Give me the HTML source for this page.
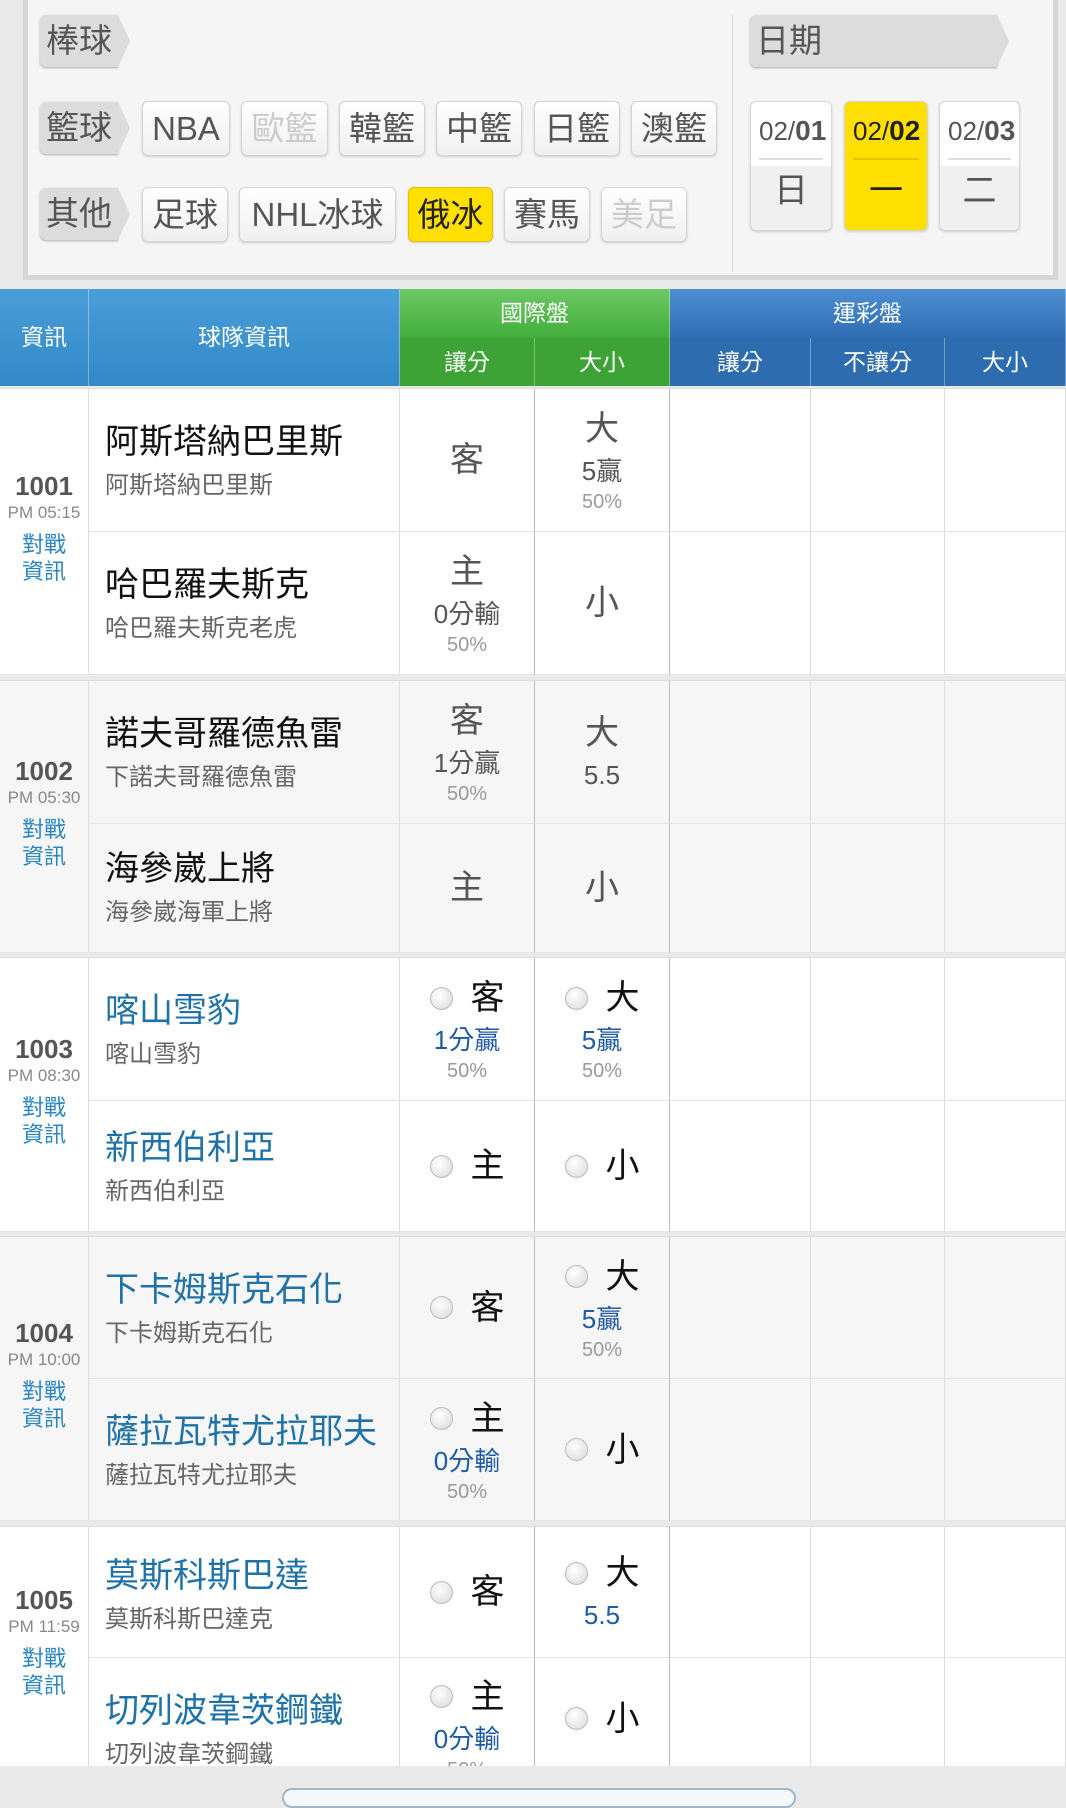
<!DOCTYPE html>
<html><head><meta charset="utf-8">
<style>
*{margin:0;padding:0;box-sizing:border-box}
body{width:1066px;height:1791px;overflow:hidden;background:#e9e9e9;font-family:"Liberation Sans","Noto Sans CJK TC",sans-serif;position:relative}
.panel{position:absolute;left:23px;top:-4px;width:1035px;height:284px;background:#f5f5f5;border:5px solid #d6d6d6;border-top:none}
.lbl{position:absolute;height:52px;background:#dcdcdc;color:#555;font-size:33px;line-height:52px;padding-left:6px;border-radius:6px 0 0 6px;box-shadow:0 1px 2px #aaa}
.lbl:after{content:"";position:absolute;right:-12px;top:0;border-left:12px solid #dcdcdc;border-top:26px solid transparent;border-bottom:26px solid transparent}
.btn{position:absolute;height:55px;background:linear-gradient(#fff,#f0f0f0);border:1px solid #d4d4d4;border-radius:6px;font-size:33px;line-height:53px;text-align:center;color:#555;box-shadow:0 1px 2px #ccc}
.dis{color:#ccc}
.sel{background:#ffe000;border-color:#e0c000;color:#222}
.dv{position:absolute;left:709px;top:15px;width:1px;height:257px;background:#d8d8d8}
.date{position:absolute;top:101px;height:130px;border:1px solid #d6d6d6;border-radius:6px;background:linear-gradient(#fff 50%,#f0f0f0 50%);text-align:center;color:#555;box-shadow:0 1px 2px #ccc}
.date .d{font-size:26px;height:58px;line-height:58px;border-bottom:2px solid #ddd;margin:0 8px}
.date .d b{font-size:28px}
.date .w{font-size:34px;line-height:62px}
.date.sel{background:#ffdf00;color:#222}
.date.sel .d{border-color:#e8c400}
.hdr{position:absolute;top:289px;height:97px;left:0;width:1066px;color:#fff;font-size:23px}
.hdr div{position:absolute;text-align:center;border-right:1px solid rgba(255,255,255,.35)}
.blk{position:absolute;left:0;width:1066px;display:grid;grid-template-columns:89px 311px 135px 135px 141px 134px 121px;background:#fff;border-top:1px solid #ddd}
.blk.g{background:#f6f6f6}
.blk>div{border-right:1px solid #ddd;border-bottom:1px solid #e4e4e4}
.blk>div.od{border-right:1px solid #bbb}
.info{grid-row:span 2;display:flex;flex-direction:column;align-items:center;justify-content:center;padding-bottom:8px}
.info .n{font-size:26px;font-weight:bold;color:#555;line-height:30px}
.info .t{font-size:17px;color:#888;line-height:24px}
.info .l{font-size:22px;color:#2a86c4;line-height:27px;margin-top:6px;text-align:center}
.team{padding-left:16px;padding-top:30px}
.team .a{font-size:34px;color:#111;line-height:46px}
.team .a.b{color:#1e72a8}
.team .s{font-size:24px;color:#666;line-height:42px}
.od{display:flex;flex-direction:column;align-items:center;justify-content:center}
.m{font-size:34px;color:#555;line-height:46px;display:flex;align-items:center}
.m.k{color:#111}
.r{width:23px;height:23px;border-radius:50%;border:1px solid #bbb;background:radial-gradient(circle at 40% 35%,#fff,#d8d8d8);margin-right:18px}
.v{font-size:26px;color:#555;line-height:38px}
.v.b{color:#1f5aa6}
.p{font-size:20px;color:#999;line-height:24px}
</style></head><body>
<div class="panel"></div>
<div class="lbl" style="left:40px;top:15px;width:78px">棒球</div>
<div class="lbl" style="left:40px;top:102px;width:78px">籃球</div>
<div class="lbl" style="left:40px;top:188px;width:78px">其他</div>
<div class="btn" style="left:142px;top:101px;width:88px">NBA</div>
<div class="btn dis" style="left:241px;top:101px;width:87px">歐籃</div>
<div class="btn" style="left:339px;top:101px;width:86px">韓籃</div>
<div class="btn" style="left:436px;top:101px;width:86px">中籃</div>
<div class="btn" style="left:534px;top:101px;width:86px">日籃</div>
<div class="btn" style="left:631px;top:101px;width:86px">澳籃</div>
<div class="btn" style="left:142px;top:187px;width:86px">足球</div>
<div class="btn" style="left:239px;top:187px;width:157px">NHL冰球</div>
<div class="btn sel" style="left:408px;top:187px;width:85px">俄冰</div>
<div class="btn" style="left:504px;top:187px;width:86px">賽馬</div>
<div class="btn dis" style="left:601px;top:187px;width:86px">美足</div>
<div class="dv" style="left:732px"></div>
<div class="lbl" style="left:750px;top:15px;width:247px;border-radius:6px 0 0 6px">日期</div>
<div class="date" style="left:750px;width:82px"><div class="d">02/<b>01</b></div><div class="w">日</div></div>
<div class="date sel" style="left:844px;width:84px"><div class="d">02/<b>02</b></div><div class="w">一</div></div>
<div class="date" style="left:939px;width:81px"><div class="d">02/<b>03</b></div><div class="w">二</div></div>

<div class="hdr">
<div style="left:0;width:89px;height:97px;line-height:97px;background:linear-gradient(#4a9ed8,#3289c6)">資訊</div>
<div style="left:89px;width:311px;height:97px;line-height:97px;background:linear-gradient(#4a9ed8,#3289c6)">球隊資訊</div>
<div style="left:400px;width:270px;height:49px;line-height:49px;background:linear-gradient(#6cc864,#42ad3c)">國際盤</div>
<div style="left:400px;top:49px;width:135px;height:48px;line-height:48px;background:#3da337">讓分</div>
<div style="left:535px;top:49px;width:135px;height:48px;line-height:48px;background:#3da337">大小</div>
<div style="left:670px;width:396px;height:49px;line-height:49px;background:linear-gradient(#4d8fd2,#2f6db3)">運彩盤</div>
<div style="left:670px;top:49px;width:141px;height:48px;line-height:48px;background:#2e6cb0">讓分</div>
<div style="left:811px;top:49px;width:134px;height:48px;line-height:48px;background:#2e6cb0">不讓分</div>
<div style="left:945px;top:49px;width:121px;height:48px;line-height:48px;background:#2e6cb0">大小</div>
</div>

<div class="blk" style="top:388px;grid-template-rows:143px 143px">
<div class="info"><div class="n">1001</div><div class="t">PM 05:15</div><div class="l">對戰<br>資訊</div></div>
<div class="team"><div class="a">阿斯塔納巴里斯</div><div class="s">阿斯塔納巴里斯</div></div>
<div class="od"><div class="m">客</div></div>
<div class="od"><div class="m">大</div><div class="v">5贏</div><div class="p">50%</div></div>
<div></div><div></div><div></div>
<div class="team"><div class="a">哈巴羅夫斯克</div><div class="s">哈巴羅夫斯克老虎</div></div>
<div class="od"><div class="m">主</div><div class="v">0分輸</div><div class="p">50%</div></div>
<div class="od"><div class="m">小</div></div>
<div></div><div></div><div></div>
</div>

<div class="blk g" style="top:680px;grid-template-rows:143px 129px">
<div class="info"><div class="n">1002</div><div class="t">PM 05:30</div><div class="l">對戰<br>資訊</div></div>
<div class="team"><div class="a">諾夫哥羅德魚雷</div><div class="s">下諾夫哥羅德魚雷</div></div>
<div class="od"><div class="m">客</div><div class="v">1分贏</div><div class="p">50%</div></div>
<div class="od"><div class="m">大</div><div class="v">5.5</div></div>
<div></div><div></div><div></div>
<div class="team" style="padding-top:22px"><div class="a">海參崴上將</div><div class="s">海參崴海軍上將</div></div>
<div class="od"><div class="m">主</div></div>
<div class="od"><div class="m">小</div></div>
<div></div><div></div><div></div>
</div>

<div class="blk" style="top:957px;grid-template-rows:143px 131px">
<div class="info"><div class="n">1003</div><div class="t">PM 08:30</div><div class="l">對戰<br>資訊</div></div>
<div class="team"><div class="a b">喀山雪豹</div><div class="s">喀山雪豹</div></div>
<div class="od"><div class="m k"><span class="r"></span>客</div><div class="v b">1分贏</div><div class="p">50%</div></div>
<div class="od"><div class="m k"><span class="r"></span>大</div><div class="v b">5贏</div><div class="p">50%</div></div>
<div></div><div></div><div></div>
<div class="team" style="padding-top:24px"><div class="a b">新西伯利亞</div><div class="s">新西伯利亞</div></div>
<div class="od"><div class="m k"><span class="r"></span>主</div></div>
<div class="od"><div class="m k"><span class="r"></span>小</div></div>
<div></div><div></div><div></div>
</div>

<div class="blk g" style="top:1236px;grid-template-rows:142px 142px">
<div class="info"><div class="n">1004</div><div class="t">PM 10:00</div><div class="l">對戰<br>資訊</div></div>
<div class="team"><div class="a b">下卡姆斯克石化</div><div class="s">下卡姆斯克石化</div></div>
<div class="od"><div class="m k"><span class="r"></span>客</div></div>
<div class="od"><div class="m k"><span class="r"></span>大</div><div class="v b">5贏</div><div class="p">50%</div></div>
<div></div><div></div><div></div>
<div class="team"><div class="a b">薩拉瓦特尤拉耶夫</div><div class="s">薩拉瓦特尤拉耶夫</div></div>
<div class="od"><div class="m k"><span class="r"></span>主</div><div class="v b">0分輸</div><div class="p">50%</div></div>
<div class="od"><div class="m k"><span class="r"></span>小</div></div>
<div></div><div></div><div></div>
</div>

<div class="blk" style="top:1526px;height:240px;overflow:hidden;grid-template-rows:131px 140px">
<div class="info" style="padding-bottom:40px"><div class="n">1005</div><div class="t">PM 11:59</div><div class="l">對戰<br>資訊</div></div>
<div class="team" style="padding-top:26px"><div class="a b">莫斯科斯巴達</div><div class="s">莫斯科斯巴達克</div></div>
<div class="od"><div class="m k"><span class="r"></span>客</div></div>
<div class="od"><div class="m k"><span class="r"></span>大</div><div class="v b">5.5</div></div>
<div></div><div></div><div></div>
<div class="team"><div class="a b">切列波韋茨鋼鐵</div><div class="s">切列波韋茨鋼鐵</div></div>
<div class="od"><div class="m k"><span class="r"></span>主</div><div class="v b">0分輸</div><div class="p">50%</div></div>
<div class="od" style="padding-bottom:18px"><div class="m k"><span class="r"></span>小</div></div>
<div></div><div></div><div></div>
</div>

<div style="position:absolute;left:282px;top:1788px;width:514px;height:20px;border:2px solid #9fb8d0;border-radius:10px;background:#f4f8fb"></div>
</body></html>
